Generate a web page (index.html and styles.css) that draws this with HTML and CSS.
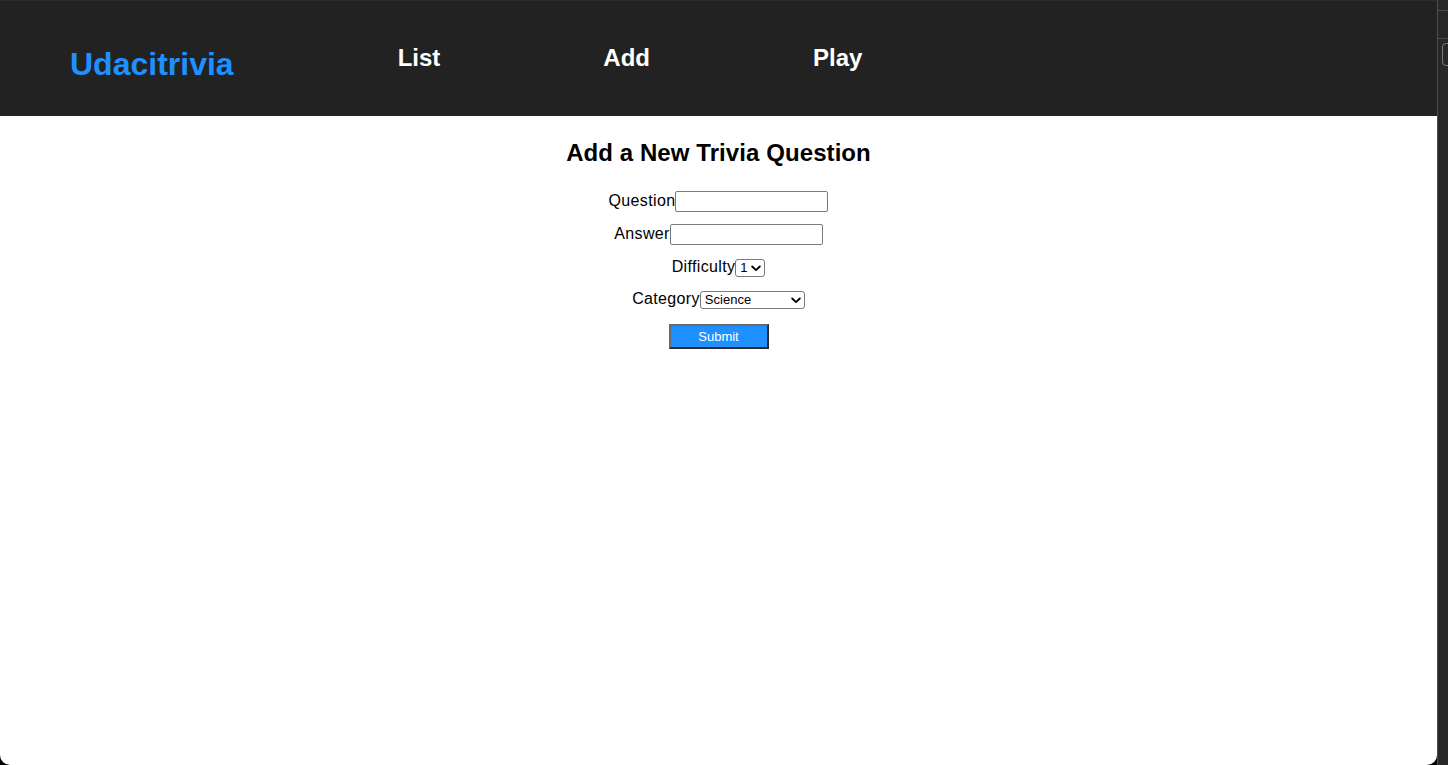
FILE: index.html
```html
<!DOCTYPE html>
<html lang="en">
<head>
<meta charset="utf-8">
<title>Udacitrivia</title>
<link rel="stylesheet" href="styles.css">
</head>
<body>
<div class="page">
  <header class="app-header">
    <h1 class="brand">Udacitrivia</h1>
    <nav class="nav">
      <h2 class="nav-item">List</h2>
      <h2 class="nav-item">Add</h2>
      <h2 class="nav-item">Play</h2>
    </nav>
  </header>
  <main class="add-form">
    <h2 class="form-title">Add a New Trivia Question</h2>
    <form class="form">
      <label class="row"><span class="label">Question</span><input class="text-input" type="text"></label>
      <label class="row"><span class="label">Answer</span><input class="text-input" type="text"></label>
      <label class="row"><span class="label">Difficulty</span><span class="select-wrap select-small"><select class="select"><option>1</option><option>2</option><option>3</option><option>4</option><option>5</option></select><svg class="chev" width="10" height="7" viewBox="0 0 10 7"><path d="M1.2 1.5 L5 5.2 L8.8 1.5" fill="none" stroke="#000" stroke-width="1.8" stroke-linecap="round" stroke-linejoin="round"/></svg></span></label>
      <label class="row row-last"><span class="label">Category</span><span class="select-wrap select-wide"><select class="select"><option>Science</option><option>Art</option><option>Geography</option><option>History</option><option>Entertainment</option><option>Sports</option></select><svg class="chev" width="10" height="7" viewBox="0 0 10 7"><path d="M1.2 1.5 L5 5.2 L8.8 1.5" fill="none" stroke="#000" stroke-width="1.8" stroke-linecap="round" stroke-linejoin="round"/></svg></span></label>
      <div class="submit-row"><button type="button" class="submit">Submit</button></div>
    </form>
  </main>
</div>
<aside class="devtools">
  <div class="dt-bar dt-bar-top"></div>
  <div class="dt-bar dt-bar-mid"></div>
  <div class="dt-box"></div>
</aside>
</body>
</html>
```
FILE: styles.css
```css
html, body {
  margin: 0;
  padding: 0;
}
body {
  background: #000;
  display: flex;
  height: 765px;
  overflow: hidden;
  font-family: "Liberation Sans", Arial, sans-serif;
}
.page {
  width: 1437px;
  flex: none;
  height: 765px;
  background: #fff;
  border-radius: 0 0 10px 10px;
  overflow: hidden;
}
.app-header {
  background: #222;
  height: 116px;
  box-sizing: border-box;
  display: flex;
  align-items: flex-start;
  padding-left: 70px;
  border-top: 1px solid #2c2c2c;
}
.brand {
  margin: 47px 0 0 0;
  font-size: 32px;
  line-height: 32px;
  font-weight: bold;
  color: #1e90ff;
}
.nav {
  display: flex;
  gap: 163px;
  margin-left: 164px;
}
.nav-item {
  margin: 45px 0 0 0;
  font-size: 24px;
  line-height: 24px;
  font-weight: bold;
  color: #fff;
}
.add-form {
  display: flex;
  flex-direction: column;
  align-items: center;
}
.form-title {
  margin: 23px 0 0 0;
  font-size: 24px;
  line-height: 28px;
  font-weight: bold;
  letter-spacing: 0.08px;
  color: #000;
}
.form {
  margin-top: 18px;
  display: flex;
  flex-direction: column;
  align-items: center;
}
.row {
  height: 33px;
  display: flex;
  align-items: center;
  font-size: 16px;
  color: #000;
}
.row-last {
  height: 31px;
}
.label {
  letter-spacing: 0.35px;
  position: relative;
  top: -1px;
}
.text-input {
  width: 153px;
  height: 21px;
  box-sizing: border-box;
  margin: 0;
  border: 1px solid #7a7a7a;
  border-radius: 2px;
  padding: 1px 3px;
  font-size: 13px;
  background: #fff;
}
.select-wrap {
  position: relative;
  display: inline-block;
}
.select {
  appearance: none;
  -webkit-appearance: none;
  margin: 0;
  height: 18px;
  box-sizing: border-box;
  border: 1px solid #7a7a7a;
  border-radius: 3px;
  background: #fff;
  font-family: "Liberation Sans", Arial, sans-serif;
  font-size: 13px;
  line-height: 16px;
  color: #000;
  padding: 0 0 0 4px;
  display: block;
}
.select-small .select {
  width: 30px;
}
.select-wide .select {
  width: 105px;
}
.chev {
  position: absolute;
  right: 4px;
  top: 6px;
  pointer-events: none;
}
.submit-row {
  margin-top: 9px;
}
.submit {
  width: 100px;
  height: 25px;
  box-sizing: border-box;
  background: #1e90ff;
  color: #fff;
  font-family: "Liberation Sans", Arial, sans-serif;
  font-size: 13px;
  border-style: solid;
  border-width: 2px;
  border-color: #6b6b6b #2a2a2a #2a2a2a #6b6b6b;
  padding: 0;
  display: block;
}
.devtools {
  flex: 1;
  position: relative;
  background: #282828;
  border-left: 1px solid #4d4d4d;
  height: 765px;
}
.dt-bar {
  height: 1px;
  background: #4a4a4a;
}
.dt-bar-top {
  margin-top: 10px;
}
.dt-bar-mid {
  margin-top: 27px;
}
.dt-box {
  margin: 4px 0 0 4px;
  width: 20px;
  height: 21px;
  border: 1px solid #7a7a7a;
  border-radius: 4px;
}
```
